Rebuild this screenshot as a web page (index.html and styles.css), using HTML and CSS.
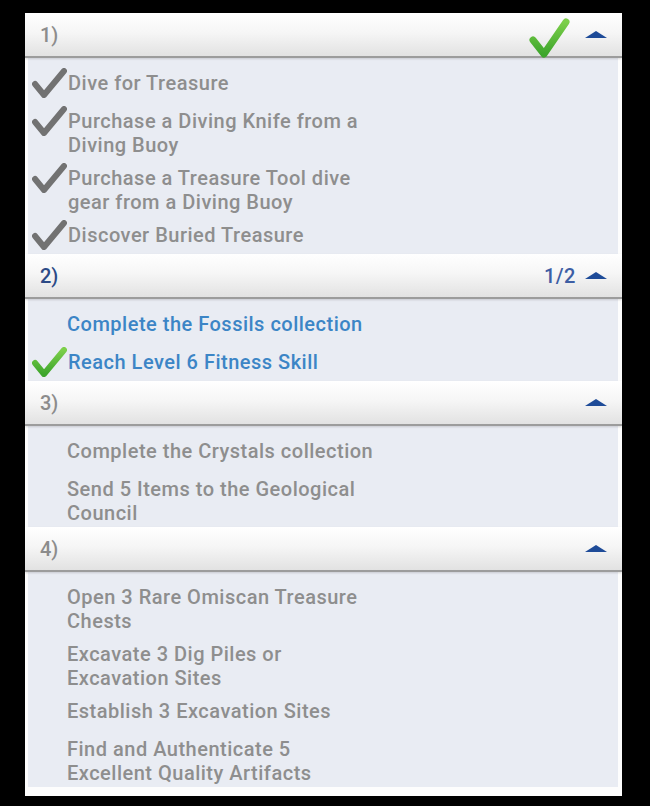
FILE: index.html
```html
<!DOCTYPE html>
<html>
<head>
<meta charset="utf-8">
<link rel="stylesheet" href="styles.css">
</head>
<body>
<div class="panel">
  <section class="section">
    <div class="hdr">
      <span class="num">1)</span>
      <span class="right">
        <svg class="bigcheck" width="42" height="42" viewBox="0 0 42 42"><defs><linearGradient id="g1" x1="0" y1="0" x2="0" y2="1"><stop offset="0" stop-color="#7ccf4a"/><stop offset="1" stop-color="#3da52c"/></linearGradient></defs><polyline points="5,23 16,37 38,5" fill="none" stroke="url(#g1)" stroke-width="7" stroke-linecap="round" stroke-linejoin="round"/></svg>
        <span class="tri"></span>
      </span>
    </div>
    <div class="items">
      <div class="item done"><svg class="chk" viewBox="0 0 35 30"><polyline points="3,16 12,27 32,3" fill="none" stroke="#727272" stroke-width="6" stroke-linecap="round" stroke-linejoin="round"/></svg><span class="txt">Dive for Treasure</span></div>
      <div class="item done"><svg class="chk" viewBox="0 0 35 30"><polyline points="3,16 12,27 32,3" fill="none" stroke="#727272" stroke-width="6" stroke-linecap="round" stroke-linejoin="round"/></svg><span class="txt">Purchase a Diving Knife from a<br>Diving Buoy</span></div>
      <div class="item done"><svg class="chk" viewBox="0 0 35 30"><polyline points="3,16 12,27 32,3" fill="none" stroke="#727272" stroke-width="6" stroke-linecap="round" stroke-linejoin="round"/></svg><span class="txt">Purchase a Treasure Tool dive<br>gear from a Diving Buoy</span></div>
      <div class="item done"><svg class="chk" viewBox="0 0 35 30"><polyline points="3,16 12,27 32,3" fill="none" stroke="#727272" stroke-width="6" stroke-linecap="round" stroke-linejoin="round"/></svg><span class="txt">Discover Buried Treasure</span></div>
    </div>
  </section>
  <section class="section active">
    <div class="hdr">
      <span class="num">2)</span>
      <span class="right"><span class="count">1/2</span><span class="tri"></span></span>
    </div>
    <div class="items">
      <div class="item"><span class="txt">Complete the Fossils collection</span></div>
      <div class="item"><svg class="chk" viewBox="0 0 35 30"><defs><linearGradient id="g2" x1="0" y1="0" x2="0" y2="1"><stop offset="0" stop-color="#7ccf4a"/><stop offset="1" stop-color="#3da52c"/></linearGradient></defs><polyline points="3,16 12,27 32,3" fill="none" stroke="url(#g2)" stroke-width="6" stroke-linecap="round" stroke-linejoin="round"/></svg><span class="txt">Reach Level 6 Fitness Skill</span></div>
    </div>
  </section>
  <section class="section">
    <div class="hdr">
      <span class="num">3)</span>
      <span class="right"><span class="tri"></span></span>
    </div>
    <div class="items">
      <div class="item"><span class="txt">Complete the Crystals collection</span></div>
      <div class="item"><span class="txt">Send 5 Items to the Geological<br>Council</span></div>
    </div>
  </section>
  <section class="section">
    <div class="hdr">
      <span class="num">4)</span>
      <span class="right"><span class="tri"></span></span>
    </div>
    <div class="items">
      <div class="item"><span class="txt">Open 3 Rare Omiscan Treasure<br>Chests</span></div>
      <div class="item"><span class="txt">Excavate 3 Dig Piles or<br>Excavation Sites</span></div>
      <div class="item"><span class="txt">Establish 3 Excavation Sites</span></div>
      <div class="item"><span class="txt">Find and Authenticate 5<br>Excellent Quality Artifacts</span></div>
    </div>
  </section>
</div>
</body>
</html>
```
FILE: styles.css
```css
html, body {
  margin: 0;
  padding: 0;
  background: #000;
}
body {
  font-family: Roboto, "Liberation Sans", sans-serif;
  height: 806px;
  overflow: hidden;
}
.panel {
  margin: 13px 0 0 25px;
  width: 597px;
  background: #fdfdfd;
  padding-bottom: 9px;
}
.section {
  display: flex;
  flex-direction: column;
}
.hdr {
  height: 43px;
  display: flex;
  align-items: center;
  justify-content: space-between;
  padding: 0 15px 0 15px;
  background: linear-gradient(#ffffff 0%, #f6f6f6 45%, #e2e2e2 100%);
  border-bottom: 2px solid #9c9c9c;
  box-shadow: 0 1px 2px rgba(0,0,0,0.15);
  position: relative;
  z-index: 1;
}
.num {
  font-size: 20px;
  font-weight: 500;
  color: #8c8c8c;
}
.active .num {
  color: #2c4a86;
}
.right {
  display: flex;
  align-items: center;
  gap: 9px;
}
.bigcheck {
  display: block;
  margin-top: 6px;
  margin-right: 6px;
}
.count {
  font-size: 20px;
  color: #3d5ea4;
  font-weight: 500;
  letter-spacing: 0.5px;
}
.tri {
  width: 0;
  height: 0;
  border-left: 11px solid transparent;
  border-right: 11px solid transparent;
  border-bottom: 7px solid #1e4b98;
  margin-top: -1px;
}
.items {
  background: #e9ecf3;
  margin: 0 4px 0 3px;
  padding: 13px 0 2px 4px;
  display: flex;
  flex-direction: column;
  gap: 9px;
}
.item {
  display: flex;
  align-items: flex-start;
  min-height: 29px;
}
.chk {
  width: 35px;
  height: 30px;
  margin-top: -3px;
  flex: none;
}
.txt {
  margin-left: 35px;
  font-size: 20px;
  font-weight: 500;
  letter-spacing: 0.5px;
  line-height: 24px;
  color: #8e8e8e;
}
.chk + .txt {
  margin-left: 1px;
}
.active .txt {
  color: #3c85c6;
}
```
